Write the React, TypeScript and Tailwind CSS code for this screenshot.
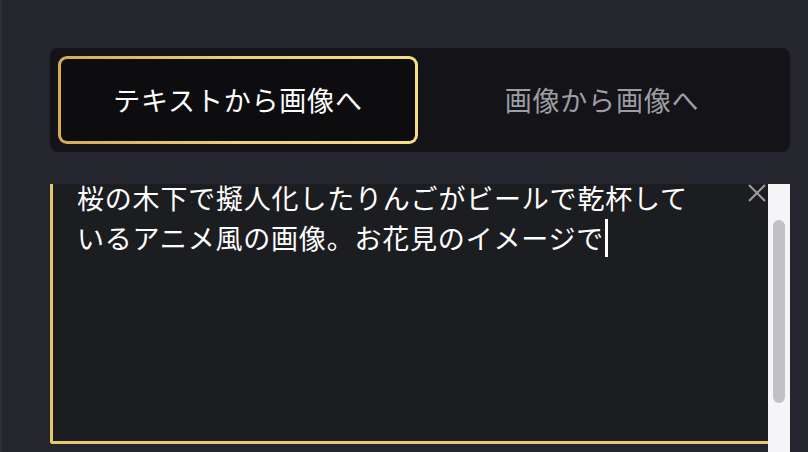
const jp = "font-['Noto_Sans_CJK_JP','Noto_Sans',sans-serif]";

const Tabs = () => {
  return (
    <div className="grid grid-cols-2 gap-1 rounded-lg bg-[#131318] p-2">
      <div className="rounded-[9px] bg-gradient-to-r from-[#d2ad52] via-[#ecd072] to-[#f5de84] p-[3px]">
        <div className="flex h-[82px] items-center justify-center rounded-md bg-[#0d0d10]">
          <span className="text-[27px] font-normal tracking-[0.8px] text-white">
            テキストから画像へ
          </span>
        </div>
      </div>
      <div className="flex h-[88px] items-center justify-center">
        <span className="text-[27px] font-normal tracking-[0.8px] text-[#9d9da3]">
          画像から画像へ
        </span>
      </div>
    </div>
  );
};

const PromptBox = () => {
  return (
    <div className="mt-8 flex">
      <div className="relative h-[260px] flex-1 overflow-hidden rounded-bl-[3px] border-b-[3px] border-l-[3px] border-[#e6c76a] bg-[#1c1d21]">
        <div className="-mt-[6px] pl-6 pr-14 text-[27px] leading-[40px] tracking-[0.8px] text-white">
          <p>桜の木下で擬人化したりんごがビールで乾杯して</p>
          <p className="flex items-center">
            いるアニメ風の画像。お花見のイメージで
            <span className="ml-[1px] inline-block h-[38px] w-[3px] bg-white" />
          </p>
        </div>
        <button className="absolute right-0 top-0 flex h-[20px] w-[22px] items-start justify-center text-[#9b9b9f]">
          <svg width="20" height="20" viewBox="0 0 20 20" fill="none">
            <path d="M2 1 L18 17 M18 1 L2 17" stroke="currentColor" strokeWidth="2" />
          </svg>
        </button>
      </div>
      <div className="flex h-[268px] w-[22px] justify-center bg-[#f5f5f7] pt-9">
        <div className="h-[183px] w-[12px] rounded-full bg-[#c1c1c3]" />
      </div>
    </div>
  );
};

export default function App() {
  return (
    <div className={`h-[452px] w-[808px] overflow-hidden border-l-2 border-[#2e2f38] bg-[#24252d] pl-12 pr-[18px] pt-12 ${jp}`}>
      <Tabs />
      <PromptBox />
    </div>
  );
}
